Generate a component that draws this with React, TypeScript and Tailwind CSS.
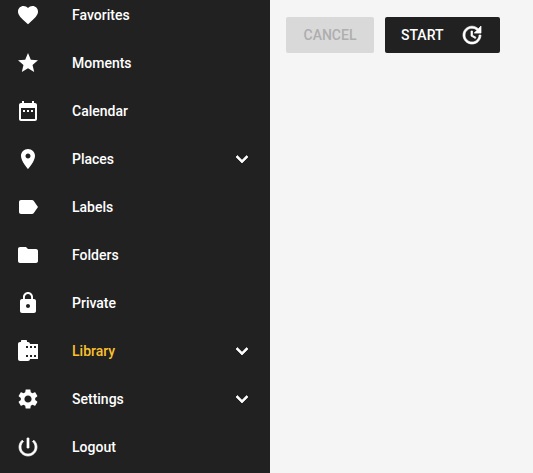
import React from 'react';

const icons: Record<string, string> = {
  favorite: 'M12 21.35l-1.45-1.32C5.4 15.36 2 12.28 2 8.5 2 5.42 4.42 3 7.5 3c1.74 0 3.41.81 4.5 2.09C13.09 3.81 14.76 3 16.5 3 19.58 3 22 5.42 22 8.5c0 3.78-3.4 6.86-8.55 11.54L12 21.35z',
  star: 'M12 17.27L18.18 21l-1.64-7.03L22 9.24l-7.19-.61L12 2 9.19 8.63 2 9.24l5.46 4.73L5.82 21z',
  date: 'M9 11H7v2h2v-2zm4 0h-2v2h2v-2zm4 0h-2v2h2v-2zm2-7h-1V2h-2v2H8V2H6v2H5c-1.11 0-1.99.9-1.99 2L3 20c0 1.1.89 2 2 2h14c1.1 0 2-.9 2-2V6c0-1.1-.9-2-2-2zm0 16H5V9h14v11z',
  place: 'M12 2C8.13 2 5 5.13 5 9c0 5.25 7 13 7 13s7-7.75 7-13c0-3.87-3.13-7-7-7zm0 9.5c-1.38 0-2.5-1.12-2.5-2.5s1.12-2.5 2.5-2.5 2.5 1.12 2.5 2.5-1.12 2.5-2.5 2.5z',
  label: 'M17.63 5.84C17.27 5.33 16.67 5 16 5L5 5.01C3.9 5.01 3 5.9 3 7v10c0 1.1.9 1.99 2 1.99L16 19c.67 0 1.27-.33 1.63-.84L22 12l-4.37-6.16z',
  folder: 'M10 4H4c-1.1 0-1.99.9-1.99 2L2 18c0 1.1.9 2 2 2h16c1.1 0 2-.9 2-2V8c0-1.1-.9-2-2-2h-8l-2-2z',
  lock: 'M18 8h-1V6c0-2.76-2.24-5-5-5S7 3.24 7 6v2H6c-1.1 0-2 .9-2 2v10c0 1.1.9 2 2 2h12c1.1 0 2-.9 2-2V10c0-1.1-.9-2-2-2zm-6 9c-1.1 0-2-.9-2-2s.9-2 2-2 2 .9 2 2-.9 2-2 2zm3.1-9H8.9V6c0-1.71 1.39-3.1 3.1-3.1 1.71 0 3.1 1.39 3.1 3.1v2z',
  roll: 'M14 5c0-1.1-.9-2-2-2h-1V2c0-.55-.45-1-1-1H6c-.55 0-1 .45-1 1v1H4c-1.1 0-2 .9-2 2v15c0 1.1.9 2 2 2h8c1.1 0 2-.9 2-2h8V5h-8zm-2 13h-2v-2h2v2zm0-9h-2V7h2v2zm4 9h-2v-2h2v2zm0-9h-2V7h2v2zm4 9h-2v-2h2v2zm0-9h-2V7h2v2z',
  settings: 'M19.14 12.94c.04-.3.06-.61.06-.94 0-.32-.02-.64-.07-.94l2.03-1.58c.18-.14.23-.41.12-.61l-1.92-3.32c-.12-.22-.37-.29-.59-.22l-2.39.96c-.5-.38-1.03-.7-1.62-.94l-.36-2.54c-.04-.24-.24-.41-.48-.41h-3.84c-.24 0-.43.17-.47.41l-.36 2.54c-.59.24-1.13.57-1.62.94l-2.39-.96c-.22-.08-.47 0-.59.22L2.74 8.87c-.12.21-.08.47.12.61l2.03 1.58c-.05.3-.09.63-.09.94s.02.64.07.94l-2.03 1.58c-.18.14-.23.41-.12.61l1.92 3.32c.12.22.37.29.59.22l2.39-.96c.5.38 1.03.7 1.62.94l.36 2.54c.05.24.24.41.48.41h3.84c.24 0 .44-.17.47-.41l.36-2.54c.59-.24 1.13-.56 1.62-.94l2.39.96c.22.08.47 0 .59-.22l1.92-3.32c.12-.22.07-.47-.12-.61l-2.01-1.58zM12 15.6c-1.98 0-3.6-1.62-3.6-3.6s1.62-3.6 3.6-3.6 3.6 1.62 3.6 3.6-1.62 3.6-3.6 3.6z',
  power: 'M13 3h-2v10h2V3zm4.83 2.17l-1.42 1.42C17.99 7.86 19 9.81 19 12c0 3.87-3.13 7-7 7s-7-3.13-7-7c0-2.19 1.01-4.14 2.58-5.42L6.17 5.17C4.23 6.82 3 9.26 3 12c0 4.97 4.03 9 9 9s9-4.03 9-9c0-2.74-1.23-5.18-3.17-6.83z',
  update: 'M21 10.12h-6.78l2.74-2.82c-2.73-2.7-7.15-2.8-9.88-.1-2.73 2.71-2.73 7.08 0 9.79s7.15 2.71 9.88 0C18.32 15.65 19 14.08 19 12.1h2c0 1.98-.88 4.55-2.64 6.29-3.51 3.48-9.21 3.48-12.72 0-3.5-3.47-3.53-9.11-.02-12.58s9.14-3.47 12.65 0L21 3v7.12zM12.5 8v4.25l3.5 2.08-.72 1.21L11 13V8h1.5z',
  expand: 'M16.59 8.59L12 13.17 7.41 8.59 6 10l6 6 6-6z',
};

// stroke thickens the thin outline glyphs, the reference renders them heavier
const Icon = ({ name, heavy }: { name: string; heavy?: boolean }) => (
  <svg viewBox="0 0 24 24" className={`w-6 h-6 shrink-0 fill-white ${heavy ? 'stroke-white stroke-[0.7px]' : ''}`}>
    <path d={icons[name]} />
  </svg>
);

const items = [
  { label: 'Favorites', icon: 'favorite' },
  { label: 'Moments', icon: 'star' },
  { label: 'Calendar', icon: 'date' },
  { label: 'Places', icon: 'place', expand: true },
  { label: 'Labels', icon: 'label' },
  { label: 'Folders', icon: 'folder' },
  { label: 'Private', icon: 'lock' },
  { label: 'Library', icon: 'roll', expand: true, active: true },
  { label: 'Settings', icon: 'settings', expand: true },
  { label: 'Logout', icon: 'power', heavy: true },
];

export default function App() {
  return (
    <div className="flex h-[473px] w-[533px] overflow-hidden bg-[#f5f5f5] font-['Roboto',sans-serif]">
      {/* Sidebar, scrolled a little so the first row is cut off */}
      <nav className="w-[270px] shrink-0 bg-[#212121] overflow-hidden">
        <div className="-mt-[9px]">
          {items.map((item) => (
            <div key={item.label} className="flex items-center h-12 px-4">
              <Icon name={item.icon} heavy={item.heavy} />
              <span className={`ml-8 flex-1 text-sm font-medium ${item.active ? 'text-[#fbc02d]' : 'text-white'}`}>
                {item.label}
              </span>
              {item.expand && <Icon name="expand" heavy />}
            </div>
          ))}
        </div>
      </nav>

      <main className="flex-1 pl-4 pt-[17px]">
        <div className="flex gap-[11px]">
          <button className="h-9 w-[88px] rounded-[2px] bg-[#d9d9d9] text-sm font-medium text-[#aeaeae]">
            CANCEL
          </button>
          <button className="flex items-center justify-between h-9 w-[115px] px-4 rounded-[2px] bg-[#212121] text-sm font-medium text-white">
            START
            <Icon name="update" heavy />
          </button>
        </div>
      </main>
    </div>
  );
}
